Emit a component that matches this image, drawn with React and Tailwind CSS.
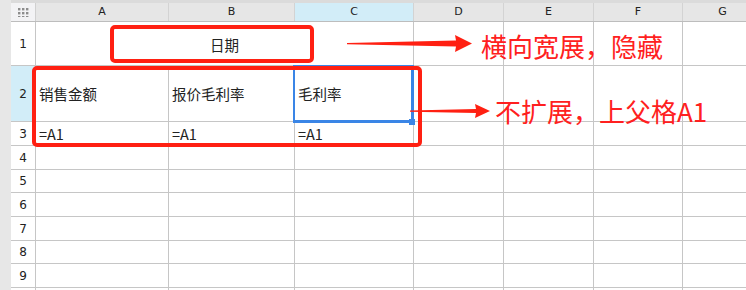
const cols = [
  { key: 'A', w: 133 },
  { key: 'B', w: 126 },
  { key: 'C', w: 119, active: true },
  { key: 'D', w: 90 },
  { key: 'E', w: 90 },
  { key: 'F', w: 89 },
  { key: 'G', w: 80 },
];

const rowHeights = { 4: 24, 5: 23, 6: 24, 7: 24, 8: 23, 9: 24, 10: 24 };

const cjk = "font-['Noto_Sans_CJK_SC','Noto_Sans',sans-serif]";
const hdr = "font-['DejaVu_Sans','Liberation_Sans',sans-serif]";

function Dots() {
  return (
    <svg width="11" height="9" viewBox="0 0 11 9">
      {[0, 4, 8].map(y =>
        [0, 4, 8].map(x => <rect key={`${x}-${y}`} x={x} y={y} width="2.4" height="2.4" fill="#8d8d8d" />)
      )}
    </svg>
  );
}

function RowNum({ n, h, active }) {
  return (
    <div
      className={`w-[25px] shrink-0 border-r border-b border-[#c6c6c6] flex items-center justify-center text-[12px] text-[#222] ${hdr} ${active ? 'bg-[#d2edf8]' : 'bg-white'}`}
      style={{ height: h }}
    >
      {n}
    </div>
  );
}

function Cell({ w, children }) {
  return (
    <div className={`shrink-0 h-full border-r border-b border-[#c6c6c6] flex items-center pl-[3px] text-[14.5px] text-[#222] ${cjk}`} style={{ width: w }}>
      {children}
    </div>
  );
}

export default function App() {
  return (
    <div className="relative w-[746px] h-[290px] overflow-hidden bg-white flex">
      <div className="w-[11px] shrink-0 bg-[#e7e7e7]" />
      <div className="flex-1 flex flex-col min-w-0">
        <div className="h-[3px] bg-[#dbdbdb] shrink-0" />
        {/* column headers */}
        <div className="h-[19px] flex shrink-0 border-b border-[#bdbdbd]">
          <div className="w-[25px] shrink-0 bg-[#f3f3f5] border-r border-[#d0d0d0] flex items-center justify-center">
            <Dots />
          </div>
          {cols.map(c => (
            <div
              key={c.key}
              className={`shrink-0 border-r border-[#d3d3d3] flex items-center justify-center text-[11px] text-[#222] ${hdr} ${c.active ? 'bg-[#d2edf8]' : 'bg-[#e6e6e6]'}`}
              style={{ width: c.w }}
            >
              {c.key}
            </div>
          ))}
        </div>

        {/* row 1 */}
        <div className="h-[44px] flex shrink-0">
          <RowNum n={1} h={44} />
          <div className={`w-[378px] shrink-0 h-full border-r border-b border-[#c6c6c6] flex items-center justify-center pt-[3px] text-[14.5px] text-[#222] ${cjk}`}>
            日期
          </div>
          <Cell w={90} />
          <Cell w={90} />
          <Cell w={89} />
          <Cell w={80} />
        </div>

        {/* row 2 */}
        <div className="h-[56px] flex shrink-0">
          <RowNum n={2} h={56} active />
          <Cell w={133}>销售金额</Cell>
          <Cell w={126}>报价毛利率</Cell>
          <Cell w={119}>毛利率</Cell>
          <Cell w={90} />
          <Cell w={90} />
          <Cell w={89} />
          <Cell w={80} />
        </div>

        {/* row 3 */}
        <div className="h-[24px] flex shrink-0">
          <RowNum n={3} h={24} />
          <Cell w={133}>=A1</Cell>
          <Cell w={126}>=A1</Cell>
          <Cell w={119}>=A1</Cell>
          <Cell w={90} />
          <Cell w={90} />
          <Cell w={89} />
          <Cell w={80} />
        </div>

        {[4, 5, 6, 7, 8, 9, 10].map(n => (
          <div key={n} className="flex shrink-0" style={{ height: rowHeights[n] }}>
            <RowNum n={n < 10 ? n : ''} h={rowHeights[n]} />
            {cols.map(c => <Cell key={c.key} w={c.w} />)}
          </div>
        ))}
      </div>

      {/* selection */}
      <div className="absolute left-[293px] top-[65px] w-[121px] h-[58px] border-[3px] border-t-2 border-l-2 border-[#3a85e6]" />
      <div className="absolute left-[409px] top-[119px] w-[6px] h-[6px] bg-[#3a85e6]" />

      {/* annotations */}
      <div className="absolute left-[110px] top-[25px] w-[204px] h-[38px] border-4 border-[#ff2012] rounded-[5px]" />
      <div className="absolute left-[32px] top-[66px] w-[390px] h-[81px] border-4 border-[#ff2012] rounded-[5px]" />

      <svg className="absolute left-0 top-0" width="746" height="290" viewBox="0 0 746 290">
        <polygon points="347,43 456,40.5 455,35 472,43.5 455,52 456,46.5 347,44.2" fill="#ff2012" />
        <polygon points="410,110.5 476,109 475,104 490,111 475,118 476,113 410,111.8" fill="#ff2012" />
      </svg>

      <div className={`absolute left-[481px] top-[28px] text-[26px] leading-[36px] text-[#ff2020] whitespace-nowrap ${cjk}`}>
        横向宽展，隐藏
      </div>
      <div className={`absolute left-[495px] top-[93px] text-[26px] leading-[36px] text-[#ff2020] whitespace-nowrap ${cjk}`}>
        不扩展，上父格A1
      </div>
    </div>
  );
}
